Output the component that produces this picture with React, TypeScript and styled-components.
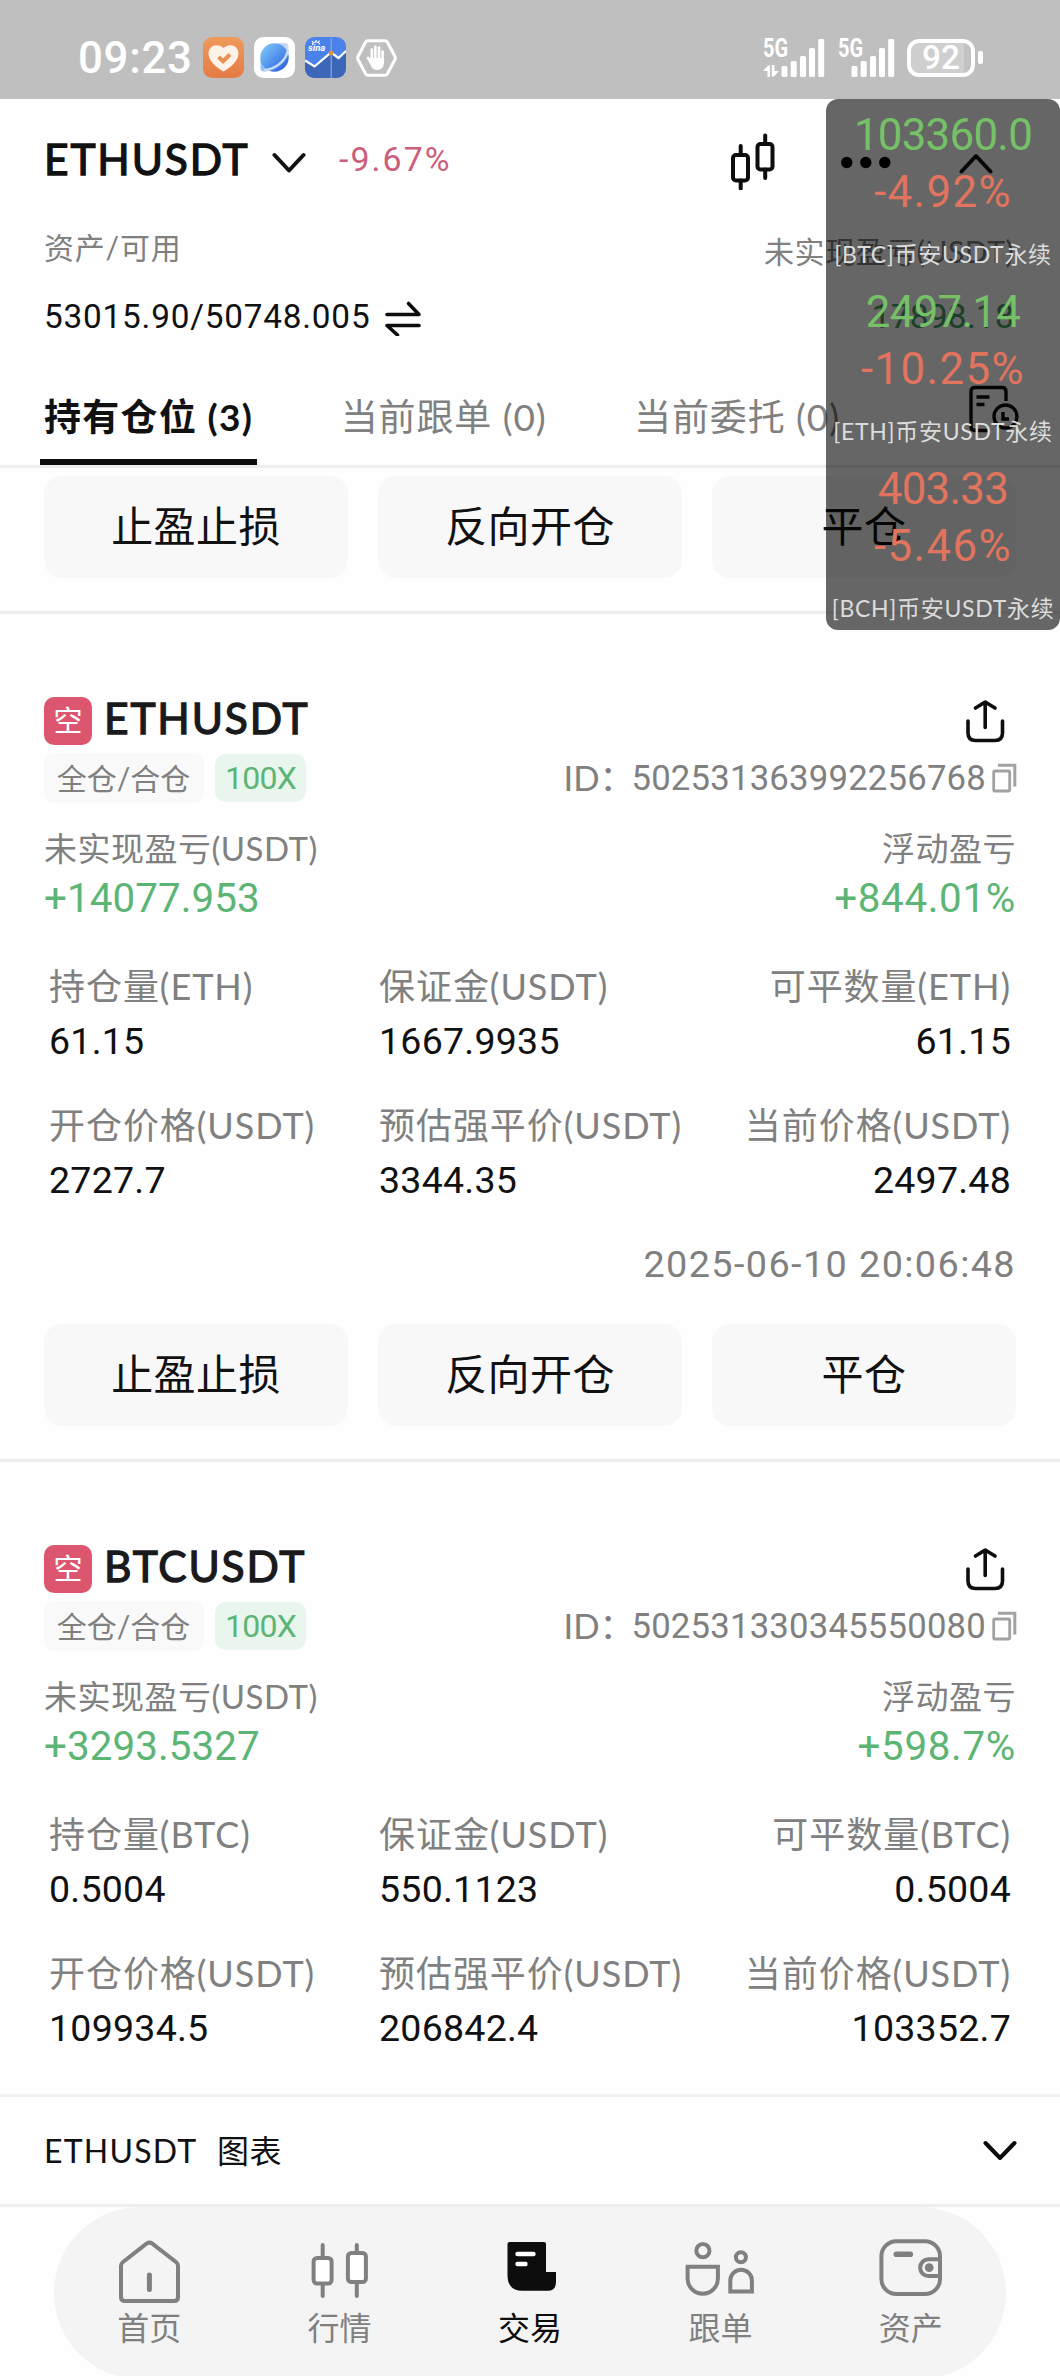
import React from "react";
import styled, { createGlobalStyle } from "styled-components";

const textFont = `Lato, "Noto Sans CJK SC", sans-serif`;
const numFont = `Roboto, "Noto Sans CJK SC", sans-serif`;

const color = {
  ink: "#111112",
  gray: "#808080",
  line: "#eeeeee",
  soft: "#f8f8f8",
  up: "#5db575",
  down: "#cb5e7b",
};

const GlobalStyle = createGlobalStyle`
  * { box-sizing: border-box; }
  body { margin: 0; background: #fefefe; }
  svg { display: block; flex: none; }
`;

const Screen = styled.div`
  position: relative;
  display: flex;
  flex-direction: column;
  width: 1060px;
  height: 2376px;
  overflow: hidden;
  background: #fefefe;
  color: ${color.ink};
  font-family: ${textFont};
  white-space: nowrap;
`;

/* ---------- status bar ---------- */

const StatusBar = styled.div`
  display: flex;
  align-items: center;
  justify-content: space-between;
  flex: none;
  height: 99px;
  padding: 16px 77px 0 78px;
  background: #bfbfbf;
  color: #fff;
`;

const StatusGroup = styled.div<{ $gap: number }>`
  display: flex;
  align-items: center;
  gap: ${(p) => p.$gap}px;
`;

const Clock = styled.span`
  width: 115px;
  font: 500 43.8px/60px ${numFont};
  letter-spacing: 0.7px;
`;

const Signal = styled.div`
  display: flex;
  align-items: flex-end;
  height: 38px;
`;

const Network = styled.div<{ $width: number }>`
  display: flex;
  flex-direction: column;
  justify-content: space-between;
  width: ${(p) => p.$width}px;
  height: 38px;
`;

const NetworkName = styled.span`
  font: 700 25px/20px ${numFont};
  transform: scaleX(0.8);
  transform-origin: left;
`;

const Battery = styled.div`
  display: flex;
  align-items: center;
  gap: 3px;
`;

const BatteryBody = styled.div`
  display: flex;
  align-items: center;
  justify-content: center;
  width: 68px;
  height: 38px;
  border: 4px solid #fff;
  border-radius: 12px;
  background: linear-gradient(90deg, #cfcfcf 88%, #c2c2c2 88%);
  font: 500 33.3px/30px ${numFont};
`;

const BatteryNub = styled.div`
  width: 5px;
  height: 13px;
  border-radius: 2px;
  background: #fff;
`;

/* ---------- header ---------- */

const TitleRow = styled.div`
  display: flex;
  align-items: center;
  flex: none;
  height: 121px;
  padding: 0 67px 0 44px;
`;

const Pair = styled.h1`
  width: 228px;
  margin: 0;
  padding-bottom: 1px;
  font: 400 42.5px/60px ${textFont};
  letter-spacing: 1.85px;
  -webkit-text-stroke: 1.3px currentColor;
`;

const Change = styled.span`
  margin-left: 33px;
  color: ${color.down};
  font: 400 33.8px/50px ${numFont};
  letter-spacing: 2.1px;
`;

const HeaderTools = styled.div`
  display: flex;
  align-items: center;
  gap: 66px;
  margin-left: auto;
`;

const InfoRow = styled.div<{ $height: number }>`
  display: flex;
  align-items: center;
  flex: none;
  height: ${(p) => p.$height}px;
  padding: 0 46px 0 44px;
`;

const InfoLabel = styled.span<{ $spacing: number; $lift?: number }>`
  padding-bottom: ${(p) => p.$lift ?? 0}px;
  color: ${color.gray};
  font: 400 30px/44px ${textFont};
  letter-spacing: ${(p) => p.$spacing}px;
`;

const Balance = styled.span`
  margin-right: 15px;
  font: 400 33.3px/44px ${numFont};
  letter-spacing: 0.8px;
`;

const PushRight = styled.div`
  margin-left: auto;
`;

const Unrealized = styled.span`
  color: #45a065;
  font: 400 33.3px/44px ${numFont};
  letter-spacing: 0.3px;
`;

const Tabs = styled.div`
  display: flex;
  align-items: center;
  flex: none;
  gap: 79.5px;
  height: 115px;
  padding: 0 41px 0 40px;
  border-bottom: 3px solid ${color.line};
`;

const Tab = styled.div<{ $active?: boolean }>`
  height: 112px;
  padding: 21px 4px 0 4px;
  border-bottom: 6px solid ${(p) => (p.$active ? "#0c0c0c" : "transparent")};
  color: ${(p) => (p.$active ? color.ink : color.gray)};
  font: ${(p) => (p.$active ? 700 : 400)} 37px/85px ${textFont};
  letter-spacing: ${(p) => (p.$active ? 1.3 : 0.9)}px;
`;

/* ---------- positions ---------- */

const List = styled.div`
  flex: none;
  height: 1626px;
  overflow: hidden;
`;

const Actions = styled.div<{ $top: number }>`
  display: grid;
  grid-template-columns: repeat(3, 1fr);
  gap: 30px;
  padding: ${(p) => p.$top}px 44px 33px;
  border-bottom: 3px solid ${color.line};
`;

const ActionButton = styled.button`
  height: 102px;
  padding: 0 0 3px;
  border: 0;
  border-radius: 18px;
  background: ${color.soft};
  color: ${color.ink};
  font: 400 42px/60px ${textFont};
  letter-spacing: 0.4px;
`;

const Card = styled.section`
  padding-top: 83px;
`;

const CardBody = styled.div`
  padding: 0 44px;
`;

const CardHead = styled.div`
  display: flex;
  align-items: center;
  height: 48px;
  padding-right: 11px;
`;

const SideBadge = styled.span`
  width: 48px;
  height: 48px;
  border-radius: 10px;
  background: #dc566f;
  color: #fff;
  font: 400 29px/47px ${textFont};
  text-align: center;
`;

const Symbol = styled.h2`
  margin: 0 auto 0 12px;
  padding-bottom: 7px;
  color: #1a1a1c;
  font: 400 42.5px/48px ${textFont};
  letter-spacing: 1.85px;
  -webkit-text-stroke: 1.3px currentColor;
`;

const TagRow = styled.div`
  display: flex;
  align-items: center;
  height: 52px;
  margin-top: 7px;
`;

const ModeTag = styled.span`
  width: 160px;
  padding-right: 1px;
  border-radius: 11px;
  background: #f9f9f9;
  color: ${color.gray};
  font: 400 30px/50px ${textFont};
  text-align: center;
`;

const LeverageTag = styled.span`
  width: 91px;
  margin-left: 11px;
  border-radius: 11px;
  background: #e8f6ed;
  color: ${color.up};
  font: 400 32px/48px ${numFont};
  letter-spacing: -0.8px;
  text-align: center;
`;

const OrderId = styled.div`
  display: flex;
  align-items: center;
  margin: 0 -1px 0 auto;
  color: ${color.gray};
  font: 400 34.7px/50px ${numFont};
  letter-spacing: 0.2px;
`;

const OrderIdLabel = styled.span`
  width: 68px;
  font-family: ${textFont};
  letter-spacing: 0;
`;

const OrderIdValue = styled.span`
  margin-right: 6px;
`;

const PnlRow = styled.div`
  display: flex;
  justify-content: space-between;
  margin-top: 22px;
`;

const PnlCell = styled.div<{ $end?: boolean }>`
  display: flex;
  flex-direction: column;
  align-items: ${(p) => (p.$end ? "flex-end" : "flex-start")};
  letter-spacing: ${(p) => (p.$end ? 0.7 : 0.1)}px;
`;

const PnlLabel = styled.span`
  color: ${color.gray};
  font: 400 33px/45px ${textFont};
  letter-spacing: 0.5px;
`;

const PnlValue = styled.span`
  padding-top: 1px;
  color: ${color.up};
  font: 400 40.3px/53px ${numFont};
`;

const Stats = styled.div`
  display: grid;
  grid-template-columns: 330px 330px 1fr;
  row-gap: 28px;
  margin-top: 35px;
  padding: 0 5px;
`;

const Stat = styled.div`
  display: flex;
  flex-direction: column;

  &:nth-child(3n) {
    align-items: flex-end;
  }
`;

const StatLabel = styled.span`
  color: ${color.gray};
  font: 400 36px/52px ${textFont};
  letter-spacing: 0.95px;
`;

const StatValue = styled.span`
  font: 400 37.5px/59px ${numFont};
  letter-spacing: 0.25px;
`;

const OpenedAt = styled.div`
  margin-top: 24px;
  color: ${color.gray};
  font: 400 37.8px/60px ${numFont};
  letter-spacing: 1.4px;
  text-align: right;
`;

/* ---------- chart bar and navigation ---------- */

const ChartBar = styled.div`
  display: flex;
  align-items: center;
  flex: none;
  height: 113px;
  padding: 0 43px 0 44px;
  border-top: 3px solid #f1f1f1;
  border-bottom: 3px solid ${color.line};
`;

const ChartPair = styled.span`
  width: 173px;
  font: 400 32px/50px ${textFont};
  letter-spacing: 1.2px;
`;

const ChartLabel = styled.span`
  margin-right: auto;
  font: 400 32px/50px ${textFont};
  letter-spacing: 0.6px;
`;

const NavArea = styled.div`
  flex: none;
  height: 169px;
  padding: 0 54px;
  overflow: hidden;
`;

const NavPill = styled.nav`
  display: flex;
  height: 172px;
  border-radius: 86px;
  background: #f4f4f4;
`;

const NavItem = styled.div<{ $active?: boolean }>`
  display: flex;
  flex-direction: column;
  align-items: center;
  flex: 1;
  padding-top: 32px;
  color: ${(p) => (p.$active ? "#0d0d0d" : color.gray)};
`;

const NavLabel = styled.span`
  margin-top: 3px;
  font: 400 32px/40px ${textFont};
`;

/* ---------- floating price widget ---------- */

const Ticker = styled.aside`
  position: absolute;
  top: 99px;
  right: 0;
  width: 234px;
  height: 531px;
  border-radius: 12px;
  background: rgba(0, 0, 0, 0.6);
`;

const TickerItem = styled.div`
  display: flex;
  flex-direction: column;
  align-items: center;
  height: 177px;
  padding-top: 7px;
`;

const TickerPrice = styled.span<{ $up?: boolean }>`
  color: ${(p) => (p.$up ? "#76c168" : "#e1745e")};
  font: 400 43.8px/58px ${numFont};
  letter-spacing: -0.7px;
`;

const TickerChange = styled.span`
  color: #e1745e;
  font: 400 43.8px/57px ${numFont};
  letter-spacing: 1.4px;
`;

const TickerName = styled.span`
  margin-top: 11px;
  color: #dcdcdc;
  font: 400 23px/44px ${textFont};
  letter-spacing: 0.7px;
`;

/* ---------- icons ---------- */

const HeartApp = () => (
  <svg width="41" height="41" viewBox="0 0 41 41">
    <defs>
      <linearGradient id="orange" x1="0" y1="0" x2="0" y2="1">
        <stop offset="0" stopColor="#ee9a5c" />
        <stop offset="1" stopColor="#e57a45" />
      </linearGradient>
    </defs>
    <rect width="41" height="41" rx="9.5" fill="url(#orange)" />
    <path d="M20.5 34.5C14 31 5.5 24 5.5 16.5C5.5 8.5 14.5 5.5 20.5 11C26.5 5.5 35.5 8.5 35.5 16.5C35.5 24 27 31 20.5 34.5Z" fill="#fef3e8" />
    <path d="M15.5 20L20 24.2L27 17.5" fill="none" stroke="#ea9055" strokeWidth="4" />
  </svg>
);

const BrowserApp = () => (
  <svg width="41" height="41" viewBox="0 0 41 41">
    <defs>
      <linearGradient id="globe" x1="0.1" y1="0.1" x2="0.9" y2="0.9">
        <stop offset="0" stopColor="#7cc3f5" />
        <stop offset="0.5" stopColor="#5495ee" />
        <stop offset="1" stopColor="#2f63dc" />
      </linearGradient>
    </defs>
    <rect width="41" height="41" rx="9.5" fill="#fff" />
    <path d="M24 6H31Q35 6 34.5 11Q34 15 32 18Z" fill="#cdd7f5" />
    <path d="M6.5 22V31Q6.5 35 11 34.5Q15 34 18 32Z" fill="#8fc2f5" />
    <circle cx="20.5" cy="20.5" r="14.2" fill="url(#globe)" />
    <path d="M10 33.5C22 32 32 24 34 13" fill="none" stroke="#c3dafa" strokeWidth="2.6" />
  </svg>
);

const SinaApp = () => (
  <svg width="41" height="41" viewBox="0 0 41 41">
    <defs>
      <clipPath id="sinaClip">
        <rect width="41" height="41" rx="9.5" />
      </clipPath>
    </defs>
    <g clipPath="url(#sinaClip)">
      <rect width="41" height="41" fill="#4a82ec" />
      <path d="M0 23L9.5 29.5L26 15.5L33.5 21L41 14V41H0Z" fill="#3c66b8" />
      <path d="M0 23.5L9.5 29.5L26 15.5L33.5 21L41 14" fill="none" stroke="#fff" strokeWidth="2.2" />
      <path d="M26.2 1V41" stroke="#91a6cf" strokeWidth="1.2" />
      <circle cx="26.2" cy="16" r="2.4" fill="#d9953f" />
      <path d="M7.5 8Q7.5 5 11 5Q14.5 5 14.5 7.5M8 5.5L7 4M11 4.5V3M13.5 5L14.5 3.5" fill="none" stroke="#fff" strokeWidth="1.1" />
      <text x="3" y="14" fill="#fff" fontFamily="Roboto, sans-serif" fontSize="9.5" fontStyle="italic" fontWeight="700">sina</text>
    </g>
  </svg>
);

const HandBadge = () => (
  <svg width="41" height="38" viewBox="0 0 41 38">
    <path d="M12 1.7H29Q30.5 1.7 31.3 3L39 17.5Q39.7 19 39 20.5L31.3 35Q30.5 36.3 29 36.3H12Q10.5 36.3 9.7 35L2 20.5Q1.3 19 2 17.5L9.7 3Q10.5 1.7 12 1.7Z" fill="none" stroke="#fff" strokeWidth="3" />
    <g stroke="#fff" strokeWidth="2.7" strokeLinecap="round" fill="none">
      <path d="M15.8 21V10.5M19.3 20V7.8M23 20V8.5M26.6 21V12.5M12 19L16 24.5" />
    </g>
    <path d="M14.5 19H28V24Q27.5 31 20.8 31Q16.5 31 14.5 26L11.3 19.5Z" fill="#fff" />
  </svg>
);

const SignalBars = () => (
  <svg width="44" height="38" viewBox="0 0 44 38" fill="#fff">
    <rect x="0.5" y="27" width="6" height="11" rx="1.5" />
    <rect x="9.7" y="22" width="6" height="16" rx="1.5" />
    <rect x="19" y="17" width="6" height="21" rx="1.5" />
    <rect x="28" y="9" width="6" height="29" rx="1.5" />
    <rect x="37.2" y="0" width="6" height="38" rx="1.5" />
  </svg>
);

const DataArrows = () => (
  <svg width="16" height="12" viewBox="0 0 16 12" fill="#fff">
    <path d="M0 6L5 0.5H7V12H4.5V6Z" />
    <path d="M16 6L11 11.5H8.8V0H11.5V6Z" />
  </svg>
);

const Chevron = ({ up = false }: { up?: boolean }) => (
  <svg width="34" height="60" viewBox="0 0 34 60" fill="none" stroke="currentColor" strokeWidth="4" strokeLinecap="round" strokeLinejoin="round">
    <path d={up ? "M2.5 41.5L17 26L31.5 41.5" : "M2.5 25L17 40.5L31.5 25"} />
  </svg>
);

const ChartChevron = () => (
  <svg width="34" height="22" viewBox="0 0 34 22" fill="none" stroke="#0d0d0d" strokeWidth="4" strokeLinecap="round" strokeLinejoin="round">
    <path d="M2.5 3L17 18L31.5 3" />
  </svg>
);

const CandleTool = () => (
  <svg width="45" height="60" viewBox="0 0 45 60" fill="none" stroke="#0d0d0d" strokeWidth="4">
    <rect x="3" y="25" width="15" height="25.5" rx="3" />
    <path d="M10.7 16V24.5M10.7 50.5V58.5" strokeLinecap="round" />
    <rect x="27.5" y="14" width="15" height="25.5" rx="3" />
    <path d="M35.2 5.5V13.5M35.2 39.5V48" strokeLinecap="round" />
  </svg>
);

const Dots = () => (
  <svg width="52" height="60" viewBox="0 0 52 60">
    <circle cx="5.8" cy="32.5" r="5.7" />
    <circle cx="24.8" cy="32.5" r="5.7" />
    <circle cx="43.8" cy="32.5" r="5.7" />
  </svg>
);

const Swap = () => (
  <svg width="36" height="38" viewBox="0 0 36 38" fill="none" stroke="#0d0d0d" strokeWidth="3.6" strokeLinecap="round" strokeLinejoin="round">
    <path d="M2 16.5H34L23.5 5.5" />
    <path d="M34 27.5H2L12.5 37" />
  </svg>
);

const History = () => (
  <svg width="52" height="50" viewBox="0 0 52 50" fill="none" stroke="#0d0d0d" strokeWidth="3.4">
    <path d="M22 46.5H8Q4 46.5 4 42.5V7.5Q4 3.5 8 3.5H35Q39 3.5 39 7.5V17" />
    <path d="M9.5 13H22.5M9.5 20.5H17.5" />
    <circle cx="38.5" cy="32.5" r="11.5" />
    <path d="M36 28V35H42" />
  </svg>
);

const Share = () => (
  <svg width="40" height="44" viewBox="0 0 40 44" fill="none" stroke="#0d0d0d" strokeWidth="3.6" strokeLinecap="round" strokeLinejoin="round">
    <path d="M3 22V34Q3 41.5 10.5 41.5H30Q37.5 41.5 37.5 34V22" />
    <path d="M20.2 28.5V3M10.5 9L20.2 3L30 9" />
  </svg>
);

const Copy = () => (
  <svg width="25" height="30" viewBox="0 0 25 30" fill="none">
    <rect x="1.7" y="8" width="16" height="20" rx="1" stroke="#a2a2a2" strokeWidth="2.8" />
    <path d="M6 2.3H22.8V23.5" stroke="#a2a2a2" strokeWidth="3" />
  </svg>
);

const HomeIcon = () => (
  <svg width="80" height="66" viewBox="0 0 80 66" fill="none" stroke="currentColor" strokeWidth="4">
    <path d="M37.5 4.7Q40.4 2.6 43.3 4.7L67 23Q69 24.6 69 27V58Q69 62 65 62H16Q12 62 12 58V27Q12 24.6 14 23Z" />
    <path d="M40.4 36V50.5" strokeWidth="5" strokeLinecap="round" />
  </svg>
);

const MarketIcon = () => (
  <svg width="80" height="66" viewBox="0 0 80 66" stroke="currentColor" strokeWidth="4">
    <path d="M22.7 6V17M22.7 46V57M56.8 6V12M56.8 45V57" strokeLinecap="round" />
    <rect x="13.6" y="19" width="18" height="25.5" rx="3.5" fill="#fff" />
    <rect x="47.9" y="14" width="18" height="29" rx="3.5" fill="#fff" />
  </svg>
);

const TradeIcon = () => (
  <svg width="80" height="66" viewBox="0 0 80 66">
    <path d="M19.5 3H54Q56 3 56 5V33H66V43Q66 51.7 58 51.7H32Q17.5 51.7 17.5 36V5Q17.5 3 19.5 3Z" fill="#0d0d0d" />
    <path d="M27.5 15H43.5M27.5 25H35.5" stroke="#fff" strokeWidth="4.4" strokeLinecap="round" />
  </svg>
);

const FollowIcon = () => (
  <svg width="80" height="66" viewBox="0 0 80 66" fill="none" stroke="currentColor" strokeWidth="4">
    <circle cx="22.9" cy="11.7" r="6.6" />
    <path d="M7.6 27.7H37.9V39.5A15.15 15.15 0 0 1 7.6 39.5Z" />
    <circle cx="60.9" cy="18.3" r="5" />
    <path d="M50.3 52.5V41.5A10.8 10.8 0 0 1 71.9 41.5V52.5Z" />
  </svg>
);

const WalletIcon = () => (
  <svg width="80" height="66" viewBox="0 0 80 66" fill="none" stroke="currentColor" strokeWidth="4">
    <rect x="10.4" y="2.3" width="58.6" height="52.7" rx="15" />
    <path d="M25.3 15.2H39.3" strokeWidth="5.6" strokeLinecap="round" />
    <path d="M69 20.3H57.5A8.35 8.35 0 0 0 57.5 37H69" />
    <circle cx="58.2" cy="28.7" r="4.4" fill="currentColor" stroke="none" />
  </svg>
);

/* ---------- data ---------- */

type Position = {
  symbol: string;
  id: string;
  pnl: string;
  pnlRate: string;
  stats: [string, string][];
  openedAt?: string;
};

const positions: Position[] = [
  {
    symbol: "ETHUSDT",
    id: "502531363992256768",
    pnl: "+14077.953",
    pnlRate: "+844.01%",
    stats: [
      ["持仓量(ETH)", "61.15"],
      ["保证金(USDT)", "1667.9935"],
      ["可平数量(ETH)", "61.15"],
      ["开仓价格(USDT)", "2727.7"],
      ["预估强平价(USDT)", "3344.35"],
      ["当前价格(USDT)", "2497.48"],
    ],
    openedAt: "2025-06-10 20:06:48",
  },
  {
    symbol: "BTCUSDT",
    id: "502531330345550080",
    pnl: "+3293.5327",
    pnlRate: "+598.7%",
    stats: [
      ["持仓量(BTC)", "0.5004"],
      ["保证金(USDT)", "550.1123"],
      ["可平数量(BTC)", "0.5004"],
      ["开仓价格(USDT)", "109934.5"],
      ["预估强平价(USDT)", "206842.4"],
      ["当前价格(USDT)", "103352.7"],
    ],
  },
];

const tickers = [
  { price: "103360.0", change: "-4.92%", name: "[BTC]币安USDT永续", up: true },
  { price: "2497.14", change: "-10.25%", name: "[ETH]币安USDT永续", up: true },
  { price: "403.33", change: "-5.46%", name: "[BCH]币安USDT永续", up: false },
];

const navItems = [
  { label: "首页", icon: <HomeIcon /> },
  { label: "行情", icon: <MarketIcon /> },
  { label: "交易", icon: <TradeIcon />, active: true },
  { label: "跟单", icon: <FollowIcon /> },
  { label: "资产", icon: <WalletIcon /> },
];

const ActionRow = ({ top }: { top: number }) => (
  <Actions $top={top}>
    <ActionButton>止盈止损</ActionButton>
    <ActionButton>反向开仓</ActionButton>
    <ActionButton>平仓</ActionButton>
  </Actions>
);

const PositionCard = ({ position }: { position: Position }) => (
  <Card>
    <CardBody>
      <CardHead>
        <SideBadge>空</SideBadge>
        <Symbol>{position.symbol}</Symbol>
        <Share />
      </CardHead>
      <TagRow>
        <ModeTag>全仓/合仓</ModeTag>
        <LeverageTag>100X</LeverageTag>
        <OrderId>
          <OrderIdLabel>ID：</OrderIdLabel>
          <OrderIdValue>{position.id}</OrderIdValue>
          <Copy />
        </OrderId>
      </TagRow>
      <PnlRow>
        <PnlCell>
          <PnlLabel>未实现盈亏(USDT)</PnlLabel>
          <PnlValue>{position.pnl}</PnlValue>
        </PnlCell>
        <PnlCell $end>
          <PnlLabel>浮动盈亏</PnlLabel>
          <PnlValue>{position.pnlRate}</PnlValue>
        </PnlCell>
      </PnlRow>
      <Stats>
        {position.stats.map(([label, value]) => (
          <Stat key={label}>
            <StatLabel>{label}</StatLabel>
            <StatValue>{value}</StatValue>
          </Stat>
        ))}
      </Stats>
      {position.openedAt && <OpenedAt>{position.openedAt}</OpenedAt>}
    </CardBody>
    {position.openedAt && <ActionRow top={30} />}
  </Card>
);

export default function App() {
  return (
    <Screen>
      <GlobalStyle />
      <StatusBar>
        <StatusGroup $gap={10}>
          <Clock>09:23</Clock>
          <HeartApp />
          <BrowserApp />
          <SinaApp />
          <HandBadge />
        </StatusGroup>
        <StatusGroup $gap={12.5}>
          <Signal>
            <Network $width={18}>
              <NetworkName>5G</NetworkName>
              <DataArrows />
            </Network>
            <SignalBars />
          </Signal>
          <Signal>
            <Network $width={13}>
              <NetworkName>5G</NetworkName>
            </Network>
            <SignalBars />
          </Signal>
          <Battery>
            <BatteryBody>92</BatteryBody>
            <BatteryNub />
          </Battery>
        </StatusGroup>
      </StatusBar>

      <TitleRow>
        <Pair>ETHUSDT</Pair>
        <Chevron />
        <Change>-9.67%</Change>
        <HeaderTools>
          <CandleTool />
          <Dots />
          <Chevron up />
        </HeaderTools>
      </TitleRow>
      <InfoRow $height={61}>
        <InfoLabel $spacing={0.8} $lift={7}>资产/可用</InfoLabel>
        <PushRight>
          <InfoLabel $spacing={0.55}>未实现盈亏(USDT)</InfoLabel>
        </PushRight>
      </InfoRow>
      <InfoRow $height={72}>
        <Balance>53015.90/50748.005</Balance>
        <Swap />
        <PushRight>
          <Unrealized>17898.18</Unrealized>
        </PushRight>
      </InfoRow>
      <Tabs>
        <Tab $active>持有仓位 (3)</Tab>
        <Tab>当前跟单 (0)</Tab>
        <Tab>当前委托 (0)</Tab>
        <PushRight>
          <History />
        </PushRight>
      </Tabs>

      <List>
        <ActionRow top={8} />
        {positions.map((position) => (
          <PositionCard key={position.id} position={position} />
        ))}
      </List>

      <ChartBar>
        <ChartPair>ETHUSDT</ChartPair>
        <ChartLabel>图表</ChartLabel>
        <ChartChevron />
      </ChartBar>
      <NavArea>
        <NavPill>
          {navItems.map((item) => (
            <NavItem key={item.label} $active={item.active}>
              {item.icon}
              <NavLabel>{item.label}</NavLabel>
            </NavItem>
          ))}
        </NavPill>
      </NavArea>

      <Ticker>
        {tickers.map((ticker) => (
          <TickerItem key={ticker.name}>
            <TickerPrice $up={ticker.up}>{ticker.price}</TickerPrice>
            <TickerChange>{ticker.change}</TickerChange>
            <TickerName>{ticker.name}</TickerName>
          </TickerItem>
        ))}
      </Ticker>
    </Screen>
  );
}
